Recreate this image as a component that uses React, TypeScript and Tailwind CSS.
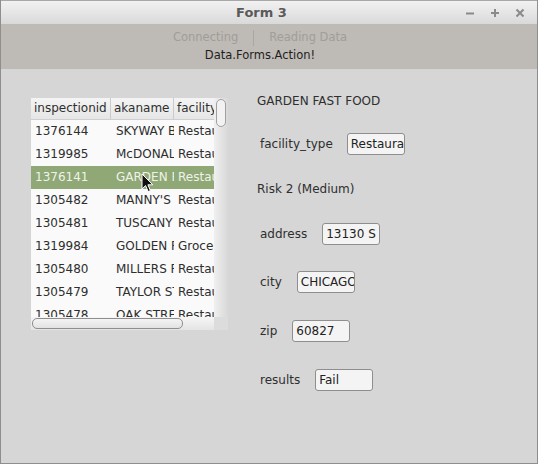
const rows = [
  ['1376144', 'SKYWAY BAR', 'Restaurant'],
  ['1319985', "McDONALD'S", 'Restaurant'],
  ['1376141', 'GARDEN FAST FOOD', 'Restaurant'],
  ['1305482', "MANNY'S", 'Restaurant'],
  ['1305481', 'TUSCANY', 'Restaurant'],
  ['1319984', 'GOLDEN FOOD', 'Grocery Store'],
  ['1305480', 'MILLERS PUB', 'Restaurant'],
  ['1305479', 'TAYLOR ST', 'Restaurant'],
  ['1305478', 'OAK STREET', 'Restaurant'],
];

const font = { fontFamily: '"DejaVu Sans", Verdana, sans-serif' };

function Field({ label, value, top, gap }: { label: string; value: string; top: string; gap: string }) {
  return (
    <div className={`flex items-center h-[22px] ml-[3px] ${gap} ${top}`}>
      <span className="text-[12px] text-[#2e2e2e]">{label}</span>
      <div className="w-[58px] h-[22px] border border-[#8e8e8e] rounded-[3px] bg-[#f4f4f4] pl-[3px] pr-[1px] overflow-hidden whitespace-nowrap text-[12px] leading-[20px] text-[#222]">
        {value}
      </div>
    </div>
  );
}

export default function App() {
  return (
    <div style={font} className="w-[538px] h-[464px] flex flex-col border-x border-b border-[#8e8e8e] bg-[#d6d6d6] overflow-hidden">
      {/* title bar */}
      <div className="relative h-[24px] flex items-center justify-center pr-[15px] bg-gradient-to-b from-[#f2f2f2] to-[#d9d9d9] border-t border-[#a8a8a8]">
        <span className="text-[13px] font-bold text-[#5a5a5a]">Form 3</span>
        <div className="absolute right-[12px] top-[7px] flex gap-[15px] items-center">
          <svg width="10" height="10" viewBox="0 0 10 10">
            <path d="M1 5.5H9" stroke="#8a8a8a" strokeWidth="2" />
          </svg>
          <svg width="10" height="10" viewBox="0 0 10 10">
            <path d="M1 5H9M5 1V9" stroke="#8a8a8a" strokeWidth="2" />
          </svg>
          <svg width="10" height="10" viewBox="0 0 10 10">
            <path d="M1.5 1.5L8.5 8.5M8.5 1.5L1.5 8.5" stroke="#8a8a8a" strokeWidth="2" />
          </svg>
        </div>
      </div>

      {/* toolbar */}
      <div className="h-[45px] bg-[#bebab5] flex flex-col items-center pt-[5px] pr-[18px]">
        <div className="flex items-center h-[18px] text-[11.5px] text-[#a19d98]">
          <span>Connecting</span>
          <span className="w-px h-[16px] bg-[#aaa6a1] mx-[15px]" />
          <span>Reading Data</span>
        </div>
        <div className="h-[16px] leading-[16px] text-[11.5px] text-[#1e1e1e]">Data.Forms.Action!</div>
      </div>

      {/* body */}
      <div className="flex pl-[30px] pt-[29px]">
        <div className="relative w-[197px] h-[232px] flex flex-col bg-[#fafafa]">
          <div className="flex flex-1 min-h-0">
            <div className="w-[183px] flex flex-col overflow-hidden">
              <div className="h-[22px] shrink-0 flex bg-gradient-to-b from-[#f4f4f4] to-[#e6e6e6] border-b border-[#cfcfcf] text-[12px] text-[#2e2e2e]">
                <div className="w-[80px] pl-[3px] leading-[21px] border-r border-[#cacaca] overflow-hidden whitespace-nowrap">inspectionid</div>
                <div className="w-[63px] pl-[3px] leading-[21px] border-r border-[#cacaca] overflow-hidden whitespace-nowrap">akaname</div>
                <div className="w-[40px] pl-[3px] leading-[21px] overflow-hidden whitespace-nowrap">facility_type</div>
              </div>
              {rows.map((r, i) => (
                <div
                  key={r[0]}
                  className={`h-[23px] shrink-0 flex text-[12px] leading-[23px] ${
                    i === 2 ? 'bg-[#8fa876] text-[#eef3e8]' : 'text-[#2e2e2e]'
                  }`}
                >
                  <div className="w-[80px] pl-[4px] overflow-hidden whitespace-nowrap">{r[0]}</div>
                  <div className="w-[63px] pl-[5px] overflow-hidden whitespace-nowrap">{r[1]}</div>
                  <div className="w-[40px] pl-[4px] overflow-hidden whitespace-nowrap">{r[2]}</div>
                </div>
              ))}
            </div>
            {/* vertical scrollbar */}
            <div className="w-[14px] bg-gradient-to-r from-[#f0f0f0] to-[#d8d8d8] pt-[1px] pl-[2px]">
              <div className="w-[10px] h-[28px] rounded-[5px] border border-[#a0a0a0] bg-[#f2f2f2]" />
            </div>
          </div>
          {/* horizontal scrollbar */}
          <div className="h-[13px] flex bg-[#d6d6d6]">
            <div className="w-[183px] bg-gradient-to-b from-[#f6f6f6] to-[#e4e4e4] pt-[1px] pl-[1px]">
              <div className="w-[151px] h-[11px] rounded-[5px] border border-[#8e8e8e] bg-gradient-to-b from-[#f4f4f4] to-[#e2e2e2]" />
            </div>
            <div className="w-[14px] bg-[#dcdcdc]" />
          </div>
          {/* mouse cursor */}
          <svg className="absolute left-[110px] top-[75px]" width="13" height="20" viewBox="0 0 13 20">
            <path d="M1 1V16L4.6 12.6L7.2 18.6L9.4 17.6L6.9 11.8H11.8Z" fill="#111" stroke="#fff" strokeWidth="1" strokeLinejoin="round" />
          </svg>
        </div>

        <div className="ml-[29px] flex flex-col">
          <div className="h-[22px] mt-[-8px] flex items-center text-[12px] text-[#2e2e2e]">GARDEN FAST FOOD</div>
          <Field label="facility_type" value="Restaurant" top="mt-[21px]" gap="gap-[14px]" />
          <div className="h-[22px] mt-[23px] flex items-center text-[12px] text-[#2e2e2e]">Risk 2 (Medium)</div>
          <Field label="address" value="13130 S BALTIMORE AVE" top="mt-[23px]" gap="gap-[15px]" />
          <Field label="city" value="CHICAGO" top="mt-[26px]" gap="gap-[15px]" />
          <Field label="zip" value="60827" top="mt-[27px]" gap="gap-[15px]" />
          <Field label="results" value="Fail" top="mt-[27px]" gap="gap-[15px]" />
        </div>
      </div>
    </div>
  );
}
